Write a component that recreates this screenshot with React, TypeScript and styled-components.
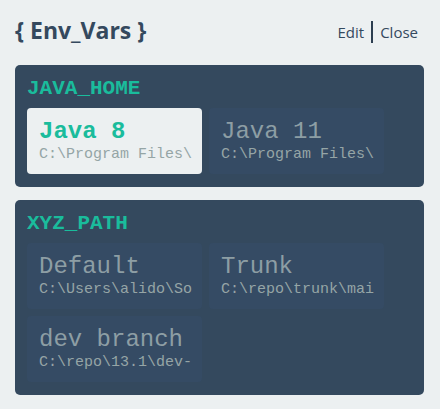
import styled, {createGlobalStyle} from 'styled-components'

type Option = {name: string; path: string; active?: boolean}
type EnvVar = {key: string; options: Option[]}

const vars: EnvVar[] = [
  {
    key: 'JAVA_HOME',
    options: [
      {name: 'Java 8', path: 'C:\\Program Files\\', active: true},
      {name: 'Java 11', path: 'C:\\Program Files\\'},
    ],
  },
  {
    key: 'XYZ_PATH',
    options: [
      {name: 'Default', path: 'C:\\Users\\alido\\So'},
      {name: 'Trunk', path: 'C:\\repo\\trunk\\mai'},
      {name: 'dev branch', path: 'C:\\repo\\13.1\\dev-'},
    ],
  },
]

const App = () => {
  return (
    <>
      <GlobalStyle />
      <Page>
        <Header>
          <Title>{'{ Env_Vars }'}</Title>
          <Actions>
            <ActionLink>Edit</ActionLink>
            <Divider />
            <ActionLink>Close</ActionLink>
          </Actions>
        </Header>
        {vars.map((v) => (
          <Panel key={v.key}>
            <VarName>{v.key}</VarName>
            <OptionGrid>
              {v.options.map((o) => (
                <OptionCard key={o.name} $active={o.active}>
                  <OptionName $active={o.active}>{o.name}</OptionName>
                  <OptionPath>{o.path}</OptionPath>
                </OptionCard>
              ))}
            </OptionGrid>
          </Panel>
        ))}
      </Page>
    </>
  )
}

export default App

const GlobalStyle = createGlobalStyle`
  html, body {
    margin: 0;
    padding: 0;
    background: #ecf0f1;
  }
  * {
    box-sizing: border-box;
  }
`

const Page = styled.div`
  width: 440px;
  padding: 12px 16px 0 15px;
  display: flex;
  flex-direction: column;
  gap: 13px;
`

const Header = styled.div`
  display: flex;
  align-items: center;
  justify-content: space-between;
  height: 40px;
`

const Title = styled.div`
  font-family: 'Open Sans', sans-serif;
  font-weight: 700;
  font-size: 23px;
  color: #34495e;
  line-height: 1;
  margin-top: -3px;
`

const Actions = styled.div`
  display: flex;
  align-items: center;
  gap: 7px;
  padding-right: 6px;
`

const ActionLink = styled.span`
  font-family: 'Open Sans', sans-serif;
  font-size: 15px;
  color: #34495e;
  cursor: pointer;
`

const Divider = styled.span`
  width: 2px;
  height: 22px;
  background: #2c3e50;
`

const Panel = styled.div`
  background: #34495e;
  border-radius: 5px;
  padding: 12px 12px 13px 12px;
`

const VarName = styled.div`
  font-family: 'Liberation Mono', 'Courier New', monospace;
  font-weight: 700;
  font-size: 21px;
  line-height: 24px;
  color: #1abc9c;
  margin-bottom: 7px;
`

const OptionGrid = styled.div`
  display: grid;
  grid-template-columns: repeat(2, 175px);
  gap: 7px;
`

const OptionCard = styled.div<{$active?: boolean}>`
  height: 66px;
  border-radius: 4px;
  padding: 10px 10px 0 12px;
  overflow: hidden;
  background: ${(p) => (p.$active ? '#ecf0f1' : '#354b64')};
`

const OptionName = styled.div<{$active?: boolean}>`
  font-family: 'Liberation Mono', 'Courier New', monospace;
  font-size: 24px;
  line-height: 28px;
  font-weight: ${(p) => (p.$active ? 700 : 400)};
  color: ${(p) => (p.$active ? '#1abc9c' : '#8d9ea4')};
  white-space: nowrap;
`

const OptionPath = styled.div`
  font-family: 'Liberation Mono', 'Courier New', monospace;
  font-size: 15px;
  line-height: 18px;
  color: #95a5a6;
  white-space: nowrap;
  overflow: hidden;
`
